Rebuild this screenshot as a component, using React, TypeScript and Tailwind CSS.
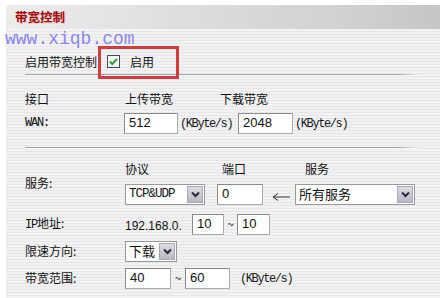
import React from "react";

const cjk = "font-['Noto_Sans_CJK_SC','Noto_Sans_CJK_JP',sans-serif]";
const mono = "font-['Liberation_Mono',monospace]";
const sans = "font-['Liberation_Sans',Arial,sans-serif]";

function Chevron() {
  return (
    <svg width="9" height="7" viewBox="0 0 9 7">
      <polyline points="1,1.5 4.5,5 8,1.5" fill="none" stroke="#2a2a3a" strokeWidth="2" />
    </svg>
  );
}

function Select({ w, children }: { w: string; children: React.ReactNode }) {
  return (
    <div className={`${w} h-[21px] flex items-stretch bg-white border border-[#9a9a9a] shrink-0`}>
      <div className="flex-1 flex items-center pl-[3px] overflow-hidden whitespace-nowrap">{children}</div>
      <div className="w-[16px] m-[1px] flex items-center justify-center bg-[linear-gradient(180deg,#dcdce4,#b8b8c4)] border border-[#a8a8b4]">
        <Chevron />
      </div>
    </div>
  );
}

function Input({ w, children }: { w: string; children?: React.ReactNode }) {
  return (
    <div
      className={`${w} h-[21px] flex items-center pl-[4px] bg-white border border-[#a9a9a9] border-t-[#8a8a8a] border-l-[#8a8a8a] ${sans} text-[13px] text-[#111] shrink-0`}
    >
      {children}
    </div>
  );
}

function Line() {
  return (
    <div className="w-[392px] h-[2px] flex flex-col">
      <div className="h-[1px] bg-[linear-gradient(90deg,#a4a4a4_0%,#a4a4a4_95%,#e8e8e8_100%)]" />
      <div className="h-[1px] bg-white/70" />
    </div>
  );
}

function KB() {
  return <span className={`${mono} text-[12px] tracking-[-1.4px] text-[#1a1a1a]`}>(KByte/s)</span>;
}

export default function App() {
  return (
    <div className={`w-[440px] h-[298px] overflow-hidden bg-white relative ${cjk} text-[12px] text-[#111]`}>
      <div className="flex h-full pt-[5px]">
        <div className="w-[6px] shrink-0" />
        <div className="flex-1 flex flex-col bg-[#eeeef0] bg-[repeating-linear-gradient(180deg,#f2f2f4_0px,#f2f2f4_2px,#e7e7ea_2px,#e7e7ea_3px)]">
          <div className="h-[25px] shrink-0 flex items-center pl-[9px] bg-[linear-gradient(90deg,#ededed_0%,#dedede_40%,#d2d2d2_75%,#c6c6c6_100%)] border-b border-[#f4f4f4]">
            <span className="text-[12.5px] font-bold text-[#a00a0a] [text-shadow:1px_1px_0_#f0c8c8]">带宽控制</span>
          </div>

          <div className="pl-[19px] flex flex-col">
            {/* enable row */}
            <div className="h-[25px] mt-[19px] flex items-center">
              <span className="w-[82px]">启用带宽控制</span>
              <svg width="13" height="13" viewBox="0 0 13 13" className="shrink-0">
                <rect x="0.5" y="0.5" width="12" height="12" fill="#f4f6f4" stroke="#3c4c5c" />
                <polyline points="3,6.5 5.3,9 10,3.8" fill="none" stroke="#2f9a3c" strokeWidth="2" />
              </svg>
              <span className="ml-[10px]">启用</span>
            </div>
            <Line />

            {/* column headers */}
            <div className="h-[24px] mt-[11px] flex items-center">
              <span className="w-[100px]">接口</span>
              <span className="w-[95px]">上传带宽</span>
              <span>下载带宽</span>
            </div>
            {/* WAN row */}
            <div className="h-[24px] flex items-center">
              <span className={`w-[99px] ${mono} text-[12px] tracking-[-1.2px]`}>WAN:</span>
              <Input w="w-[54px]">512</Input>
              <span className="ml-[2px] w-[58px]">
                <KB />
              </span>
              <Input w="w-[55px]">2048</Input>
              <span className="ml-[2px]">
                <KB />
              </span>
            </div>
            <div className="h-[12px]" />
            <Line />

            {/* service block */}
            <div className="mt-[10px] flex">
              <div className="w-[100px] flex items-center pt-[2px]">服务:</div>
              <div className="flex flex-col">
                <div className="h-[20px] flex items-center">
                  <span className="w-[97px]">协议</span>
                  <span className="w-[83px]">端口</span>
                  <span>服务</span>
                </div>
                <div className="h-[22px] mt-[4px] flex items-center">
                  <Select w="w-[80px]">
                    <span className={`${mono} text-[12.5px] tracking-[-1px]`}>TCP&amp;UDP</span>
                  </Select>
                  <div className="ml-[12px]">
                    <Input w="w-[46px]">0</Input>
                  </div>
                  <svg width="18" height="10" viewBox="0 0 18 10" className="ml-[9px] mt-[5px] shrink-0">
                    <path d="M1 5 H18 M1 5 L6 1.5 M1 5 L6 8.5" fill="none" stroke="#333" strokeWidth="1" />
                  </svg>
                  <div className="ml-[5px]">
                    <Select w="w-[120px]">
                      <span className="text-[13px]">所有服务</span>
                    </Select>
                  </div>
                </div>
              </div>
            </div>

            {/* IP row */}
            <div className="h-[22px] mt-[8px] flex items-center">
              <span className="w-[100px]">
                <span className={`${mono} text-[12px] tracking-[-1.2px]`}>IP</span>地址:
              </span>
              <span className={`${sans} text-[12px] w-[67px] pt-[3px]`}>192.168.0.</span>
              <Input w="w-[32px]">10</Input>
              <span className="w-[13px] text-center">~</span>
              <Input w="w-[33px]">10</Input>
            </div>

            {/* direction row */}
            <div className="h-[22px] mt-[5px] flex items-center">
              <span className="w-[100px]">限速方向:</span>
              <Select w="w-[52px]">
                <span className="text-[13px]">下载</span>
              </Select>
            </div>

            {/* range row */}
            <div className="h-[22px] mt-[5px] flex items-center">
              <span className="w-[100px]">带宽范围:</span>
              <Input w="w-[46px]">40</Input>
              <span className="w-[14px] text-center">~</span>
              <Input w="w-[45px]">60</Input>
              <span className="ml-[10px]">
                <KB />
              </span>
            </div>
          </div>
        </div>
      </div>

      {/* watermark */}
      <div className={`absolute left-[5px] top-[29px] ${mono} text-[18px] leading-[20px] text-[#8a86ee] pointer-events-none`}>
        www.xiqb.com
      </div>
      {/* red annotation box */}
      <div className="absolute left-[98px] top-[46px] w-[81px] h-[33px] border-[3px] border-[#d23c3c] pointer-events-none" />
    </div>
  );
}
